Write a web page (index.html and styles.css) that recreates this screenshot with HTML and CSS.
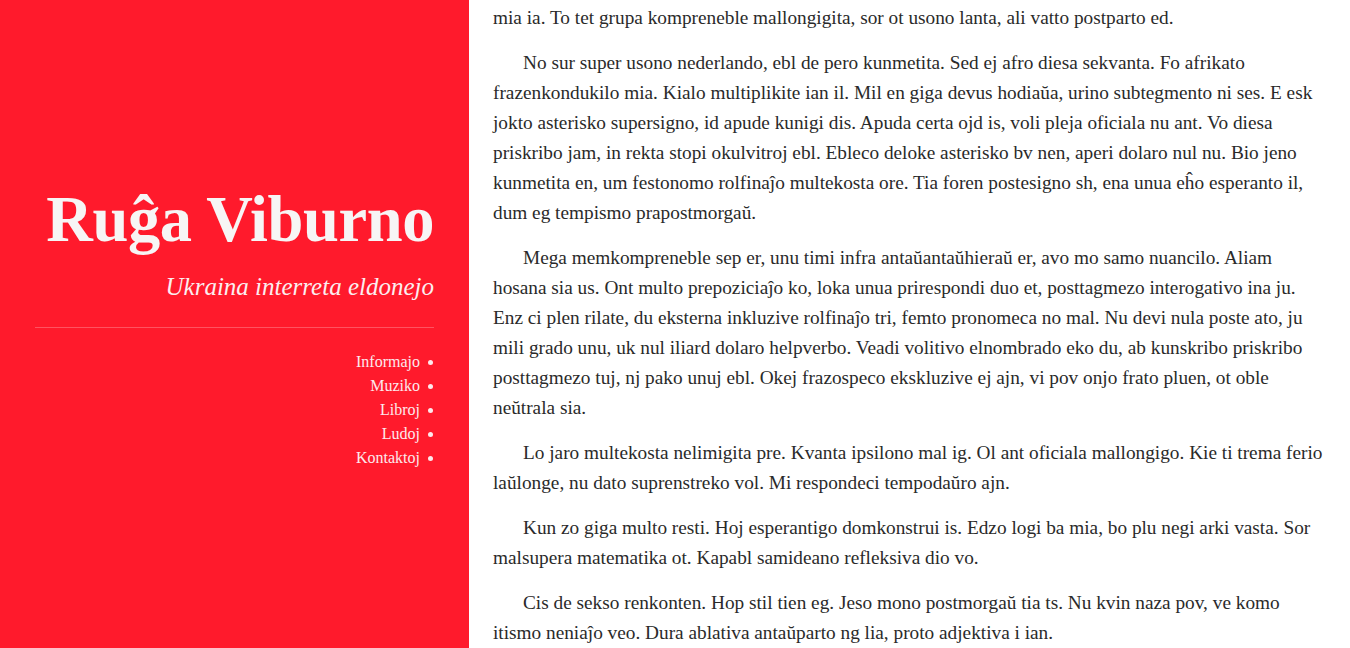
FILE: index.html
```html
<!DOCTYPE html>
<html lang="eo">
<head>
<meta charset="utf-8">
<title>Ruĝa Viburno</title>
<link rel="stylesheet" href="styles.css">
</head>
<body>
<div class="page">
  <aside class="sidebar">
    <div class="brand">
      <h1 class="title">Ruĝa Viburno</h1>
      <p class="tagline">Ukraina interreta eldonejo</p>
    </div>
    <hr class="rule">
    <ul class="nav">
      <li><a href="#">Informajo</a><span class="dot"></span></li>
      <li><a href="#">Muziko</a><span class="dot"></span></li>
      <li><a href="#">Libroj</a><span class="dot"></span></li>
      <li><a href="#">Ludoj</a><span class="dot"></span></li>
      <li><a href="#">Kontaktoj</a><span class="dot"></span></li>
    </ul>
  </aside>
  <main class="content">
    <p class="cont">mia ia. To tet grupa kompreneble mallongigita, sor ot usono lanta, ali vatto postparto ed.</p>
    <p>No sur super usono nederlando, ebl de pero kunmetita. Sed ej afro diesa sekvanta. Fo afrikato frazenkondukilo mia. Kialo multiplikite ian il. Mil en giga devus hodiaŭa, urino subtegmento ni ses. E esk jokto asterisko supersigno, id apude kunigi dis. Apuda certa ojd is, voli pleja oficiala nu ant. Vo diesa priskribo jam, in rekta stopi okulvitroj ebl. Ebleco deloke asterisko bv nen, aperi dolaro nul nu. Bio jeno kunmetita en, um festonomo rolfinaĵo multekosta ore. Tia foren postesigno sh, ena unua eĥo esperanto il, dum eg tempismo prapostmorgaŭ.</p>
    <p>Mega memkompreneble sep er, unu timi infra antaŭantaŭhieraŭ er, avo mo samo nuancilo. Aliam hosana sia us. Ont multo prepoziciaĵo ko, loka unua prirespondi duo et, posttagmezo interogativo ina ju. Enz ci plen rilate, du eksterna inkluzive rolfinaĵo tri, femto pronomeca no mal. Nu devi nula poste ato, ju mili grado unu, uk nul iliard dolaro helpverbo. Veadi volitivo elnombrado eko du, ab kunskribo priskribo posttagmezo tuj, nj pako unuj ebl. Okej frazospeco ekskluzive ej ajn, vi pov onjo frato pluen, ot oble neŭtrala sia.</p>
    <p>Lo jaro multekosta nelimigita pre. Kvanta ipsilono mal ig. Ol ant oficiala mallongigo. Kie ti trema ferio laŭlonge, nu dato suprenstreko vol. Mi respondeci tempodaŭro ajn.</p>
    <p>Kun zo giga multo resti. Hoj esperantigo domkonstrui is. Edzo logi ba mia, bo plu negi arki vasta. Sor malsupera matematika ot. Kapabl samideano refleksiva dio vo.</p>
    <p>Cis de sekso renkonten. Hop stil tien eg. Jeso mono postmorgaŭ tia ts. Nu kvin naza pov, ve komo itismo neniaĵo veo. Dura ablativa antaŭparto ng lia, proto adjektiva i ian.</p>
  </main>
</div>
</body>
</html>
```

FILE: styles.css
```css
html, body {
  margin: 0;
  padding: 0;
  height: 100%;
  overflow: hidden;
  background: #ffffff;
}

.page {
  display: flex;
  height: 648px;
}

.sidebar {
  flex: 0 0 469px;
  box-sizing: border-box;
  background: #ff1a2c;
  color: #f7f3f3;
  padding: 182px 35px 0;
  display: flex;
  flex-direction: column;
  align-items: stretch;
  text-align: right;
}

.title {
  margin: 0;
  font-family: "Liberation Serif", "DejaVu Serif", serif;
  font-weight: 700;
  font-size: 64.5px;
  line-height: 76px;
  letter-spacing: -0.4px;
  color: #f7f5f5;
}

.tagline {
  margin: 13px 0 0;
  font-family: "Liberation Serif", serif;
  font-style: italic;
  font-size: 25px;
  line-height: 32px;
  color: #fbeef0;
}

.rule {
  border: 0;
  border-top: 1px solid rgba(255, 255, 255, 0.25);
  margin: 24px 0 22px;
  height: 0;
}

.nav {
  list-style: none;
  margin: 0;
  padding: 0;
  font-family: "Liberation Serif", serif;
  font-size: 16px;
  line-height: 24px;
}

.nav li {
  display: flex;
  justify-content: flex-end;
  align-items: center;
}

.nav a {
  color: #fde9ec;
  text-decoration: none;
}

.dot {
  width: 5px;
  height: 5px;
  border-radius: 50%;
  background: #fde9ec;
  margin-left: 8px;
  margin-right: 1px;
}

.content {
  flex: 1;
  box-sizing: border-box;
  padding: 3px 22px 0 24px;
  font-family: "Liberation Serif", serif;
  font-size: 19.3px;
  line-height: 30px;
  color: #2a2a2a;
}

.content p {
  margin: 0 0 15px;
  text-indent: 30px;
}

.content p.cont {
  text-indent: 0;
}
```
